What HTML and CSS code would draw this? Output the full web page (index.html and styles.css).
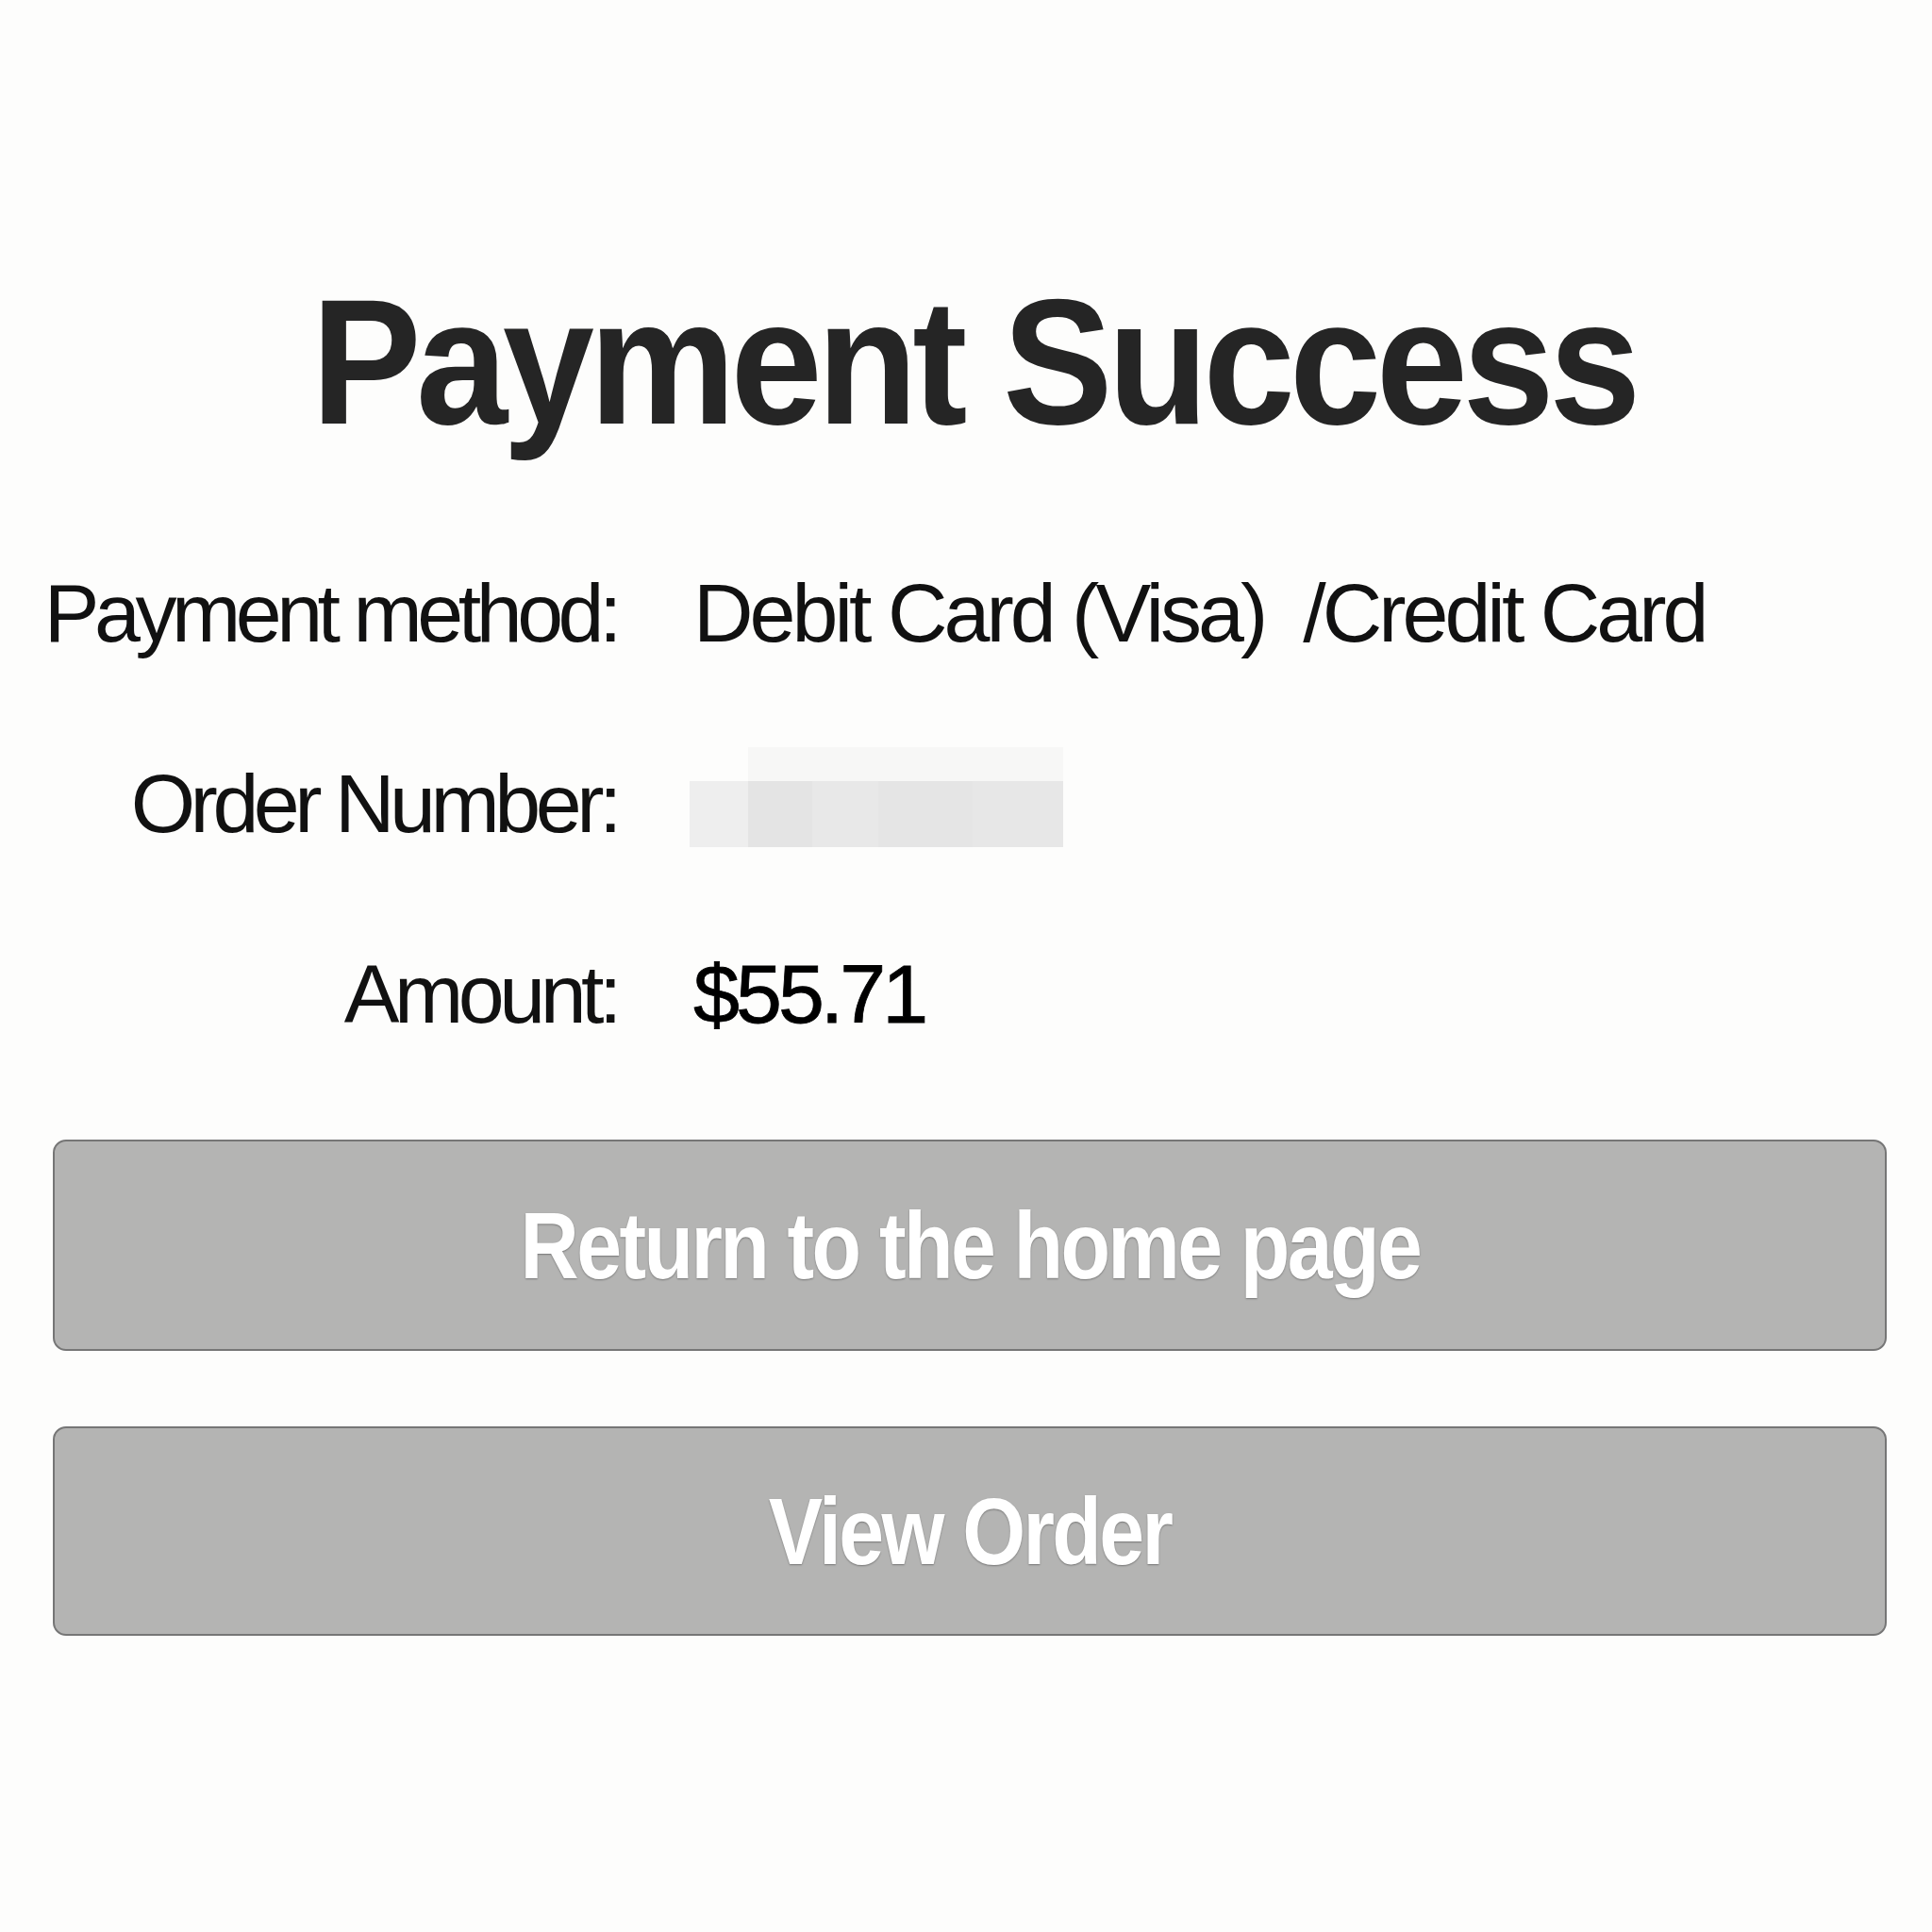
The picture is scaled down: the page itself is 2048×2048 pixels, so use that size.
FILE: index.html
```html
<!DOCTYPE html>
<html lang="en">
<head>
    <meta charset="UTF-8">
    <meta name="viewport" content="width=device-width, initial-scale=1.0">
    <title>Payment Success</title>
    <link rel="stylesheet" href="styles.css">
</head>
<body>
    <div id="maincont">
        <h1 class="title"><span>Payment Success</span></h1>

        <div class="details">
            <div class="label">Payment method:</div>
            <div class="value">Debit Card (Visa) &nbsp;/Credit Card</div>

            <div class="label">Order Number:</div>
            <div class="value">
                <div class="redact">
                    <div class="redact-top"></div>
                    <div class="redact-bottom"></div>
                </div>
            </div>

            <div class="label">Amount:</div>
            <div class="value amount">$55.71</div>
        </div>

        <div class="actions">
            <button class="btn" id="home"><span>Return to the home page</span></button>
            <button class="btn" id="order"><span>View Order</span></button>
        </div>
    </div>
</body>
</html>
```

FILE: styles.css
```css
*{
    box-sizing: border-box;
    font-family: "Liberation Sans", Arial, Helvetica, sans-serif;
}

body{
    margin: 0;
    background-color: #fdfdfc;
}

#maincont{
    padding: 288px 48px 0 56px;
}

.title{
    margin: 0;
    font-size: 190px;
    line-height: 190px;
    font-weight: 700;
    color: #252525;
    text-align: center;
    padding-left: 8px;
}

.title span{
    display: inline-block;
    letter-spacing: -6px;
    transform: scaleX(0.92);
}

.details{
    margin-top: 122px;
    margin-left: -10px;
    display: grid;
    grid-template-columns: 608px 1fr;
    column-gap: 81px;
    row-gap: 102px;
    font-size: 88px;
    line-height: 100px;
    color: #111;
}

.label{
    text-align: right;
    letter-spacing: -5.5px;
    white-space: nowrap;
}

.value{
    letter-spacing: -4px;
    white-space: nowrap;
}

.amount{
    color: #000;
    -webkit-text-stroke: 0.8px #000;
}

.redact{
    width: 396px;
    margin-top: -10px;
    margin-left: -4px;
    display: flex;
    flex-direction: column;
}

.redact-top{
    height: 36px;
    margin-left: 62px;
    background-color: #f7f7f6;
}

.redact-bottom{
    height: 70px;
    background: linear-gradient(90deg, #eeeeee 0 62px, #e4e4e4 62px 130px, #e8e8e8 130px 200px, #e5e5e5 200px 300px, #e7e7e7 300px);
}

.actions{
    margin-top: 104px;
    display: flex;
    flex-direction: column;
    gap: 80px;
}

.btn{
    width: 100%;
    height: 224px;
    border: 2px solid #767676;
    border-radius: 14px;
    background-color: #b4b4b3;
    color: #fff;
    font-size: 100px;
    font-weight: 700;
    display: flex;
    justify-content: center;
    align-items: center;
    cursor: pointer;
    padding: 0;
}

.btn span{
    display: inline-block;
    letter-spacing: -3px;
    transform: scaleX(0.86);
    text-shadow: 0 1px 2px rgba(0, 0, 0, 0.35);
}

#order{
    height: 222px;
}
```
